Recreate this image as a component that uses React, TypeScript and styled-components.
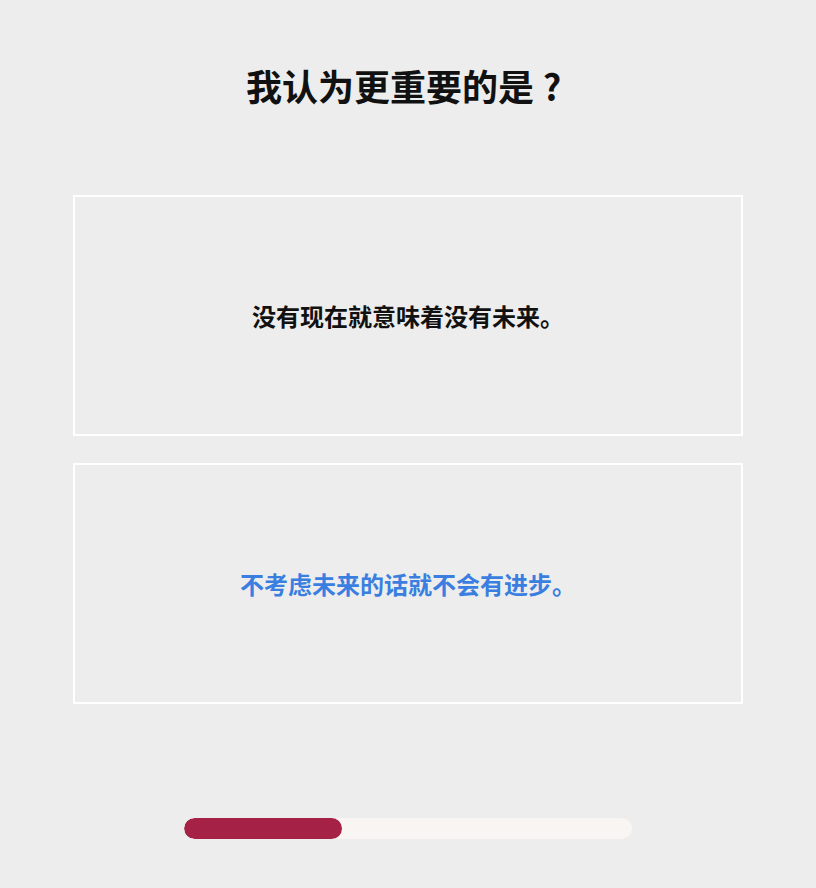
import React from "react";
import styled, { createGlobalStyle } from "styled-components";

const Global = createGlobalStyle`
  html, body { margin: 0; padding: 0; background: #ededed; }
  body {
    font-family: "Noto Sans CJK SC", "Noto Sans", sans-serif;
  }
  * { box-sizing: border-box; }
`;

const Page = styled.div`
  display: flex;
  flex-direction: column;
  align-items: center;
  min-height: 888px;
  background: #ededed;
  padding-top: 62px;
`;

const Title = styled.h1`
  margin: 0;
  font-size: 36px;
  line-height: 46px;
  font-weight: 700;
  color: #111;
`;

const FullWidthMark = styled.span`
  display: inline-block;
  width: 1em;
  text-align: center;
`;

const Options = styled.div`
  margin-top: 87px;
  display: flex;
  flex-direction: column;
  gap: 27px;
`;

const Option = styled.div<{ $selected?: boolean }>`
  width: 670px;
  height: 241px;
  border: 2px solid #ffffff;
  background: #ededed;
  display: flex;
  align-items: center;
  justify-content: center;
  font-size: 24px;
  line-height: 32px;
  font-weight: 700;
  color: ${(p) => (p.$selected ? "#3a7fe0" : "#111")};
  cursor: pointer;
`;

const Track = styled.div`
  margin-top: 114px;
  width: 448px;
  height: 21px;
  border-radius: 11px;
  background: #f9f5f2;
  overflow: hidden;
`;

const Fill = styled.div`
  height: 100%;
  background: #a52146;
  border-radius: 11px;
`;

export default function App() {
  const progress = 158 / 448;
  return (
    <>
      <Global />
      <Page>
        <Title>
          我认为更重要的是<FullWidthMark>?</FullWidthMark>
        </Title>
        <Options>
          <Option>没有现在就意味着没有未来。</Option>
          <Option $selected>不考虑未来的话就不会有进步。</Option>
        </Options>
        <Track>
          <Fill style={{ width: `${progress * 100}%` }} />
        </Track>
      </Page>
    </>
  );
}
